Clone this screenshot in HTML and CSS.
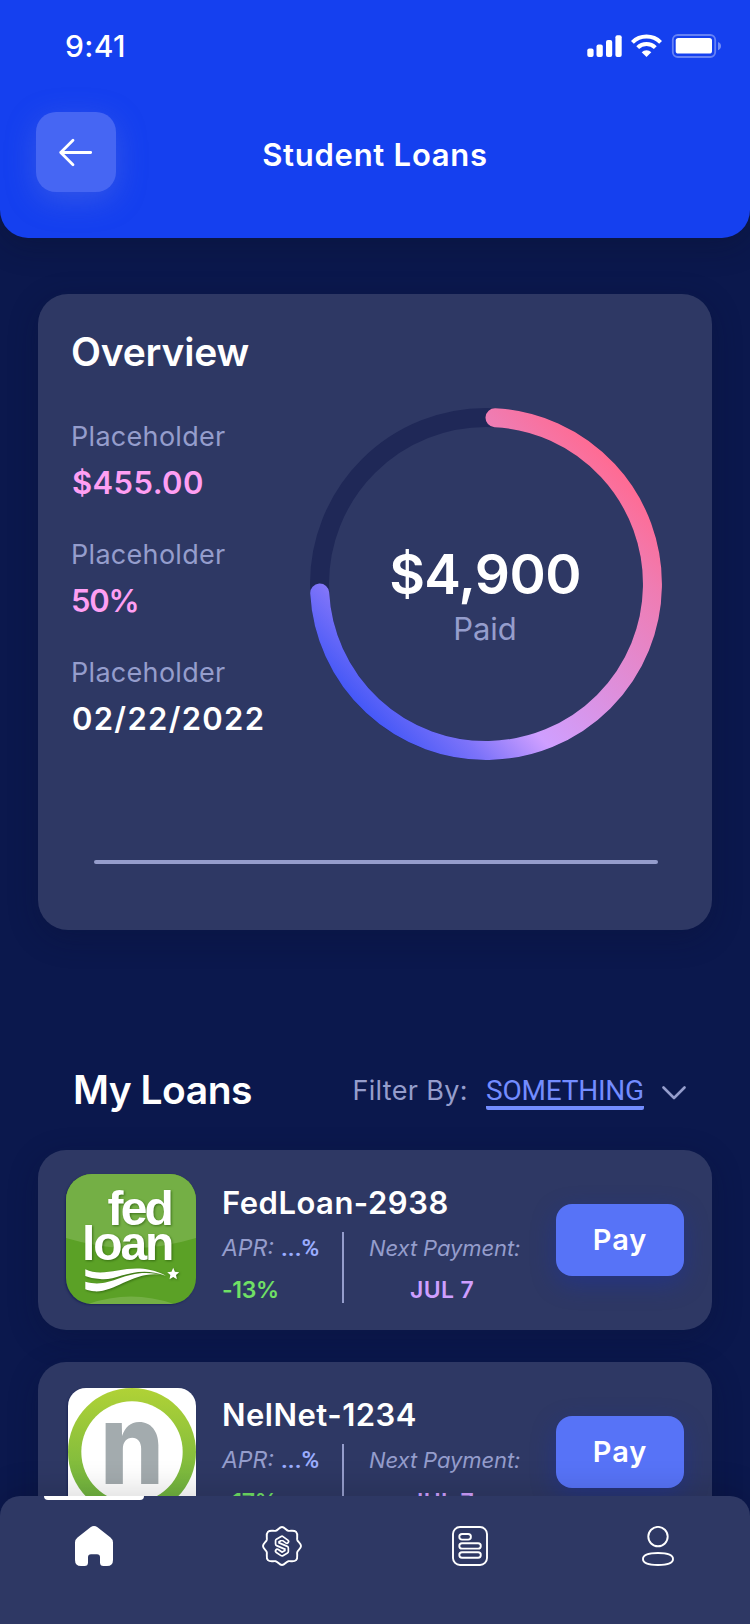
FILE: index.html
```
<!DOCTYPE html>
<html lang="en">
<head>
    <meta charset="UTF-8">
    <title>Student Loans</title>
    <link rel="stylesheet" href="styles.css">
</head>
<body>
<div class="header">
    <div class="status">
        <span>9:41</span>
        <svg width="136" height="24" viewBox="0 0 136 24" fill="#fff">
            <rect x="1.3" y="14.5" width="6.3" height="8.5" rx="2"/>
            <rect x="10.5" y="10.5" width="6.3" height="12.5" rx="2"/>
            <rect x="20" y="6" width="6.2" height="17" rx="2"/>
            <rect x="29.4" y="1.2" width="6.3" height="21.8" rx="2"/>
            <path d="M46.4 8.4a20 20 0 0 1 28.2 0M51.7 13.7a12.5 12.5 0 0 1 17.6 0" fill="none" stroke="#fff" stroke-width="4"/>
            <path d="M60.5 23l-4.8-4.8a6.8 6.8 0 0 1 9.6 0z"/>
            <rect x="86.8" y="1" width="42.4" height="22" rx="5" fill="none" stroke="#fff" stroke-width="1.8" opacity=".35"/>
            <rect x="89.7" y="4" width="36.3" height="15.6" rx="2.6"/>
            <path d="M132 8c4 1.2 4 7 0 8.3z" opacity=".4"/>
        </svg>
    </div>
    <div class="titlebar">
        <button class="back">
            <svg width="80" height="80" viewBox="0 0 80 80" fill="none" stroke="#fff" stroke-width="2.8" stroke-linecap="round" stroke-linejoin="round">
                <path d="M54.7 40.5H24.7M37 28.3L24.7 40.5L37 52.8"/>
            </svg>
        </button>
        <h1>Student Loans</h1>
    </div>
</div>

<div class="overview">
    <h2>Overview</h2>
    <div class="overview-body">
        <div class="stats">
            <div class="stat">
                <span class="label">Placeholder</span>
                <span class="value">$455.00</span>
            </div>
            <div class="stat">
                <span class="label">Placeholder</span>
                <span class="value percent">50%</span>
            </div>
            <div class="stat">
                <span class="label">Placeholder</span>
                <span class="value date">02/22/2022</span>
            </div>
        </div>
        <div class="ring">
            <svg width="352" height="352" viewBox="0 0 352 352" fill="none" stroke-width="19">
                <defs>
                    <linearGradient id="paid" gradientUnits="userSpaceOnUse" x1="49" y1="297" x2="303" y2="55">
                        <stop offset="0" stop-color="#4558f7"/>
                        <stop offset=".15" stop-color="#7d73f9"/>
                        <stop offset=".31" stop-color="#cf9fff"/>
                        <stop offset=".84" stop-color="#ef7cb2"/>
                        <stop offset="1" stop-color="#ff6b93"/>
                    </linearGradient>
                </defs>
                <circle cx="176" cy="176" r="166.5" stroke="#1f2857"/>
                <path d="M185 9.7A166.5 166.5 0 1 1 9.7 185" stroke="url(#paid)" stroke-linecap="round"/>
            </svg>
            <div class="ring-text">
                <span class="amount">$4,900</span>
                <span class="paid">Paid</span>
            </div>
        </div>
    </div>
    <div class="line"></div>
</div>

<div class="loans-head">
    <h2>My Loans</h2>
    <div class="filter">
        <span class="filter-label">Filter By:</span>
        <span class="filter-value">SOMETHING</span>
        <svg width="24" height="14" viewBox="0 0 24 14" fill="none" stroke="#959dcc" stroke-width="2.6" stroke-linecap="round" stroke-linejoin="round">
            <path d="M1.5 1.5L12 12L22.5 1.5"/>
        </svg>
    </div>
</div>

<div class="loans">
    <div class="loan">
        <svg class="logo" width="130" height="130" viewBox="0 0 130 130">
            <rect width="130" height="130" fill="#5ba126"/>
            <path d="M0 0H130V64Q65 84 0 64Z" fill="#74af45"/>
            <path d="M22 130Q65 115 108 130Z" fill="#74af45"/>
            <g class="fed" fill="#fff">
                <text x="41.5" y="51" letter-spacing="-2.84">fed</text>
                <text x="16" y="86" letter-spacing="-2.12">loan</text>
                <path d="M19.3 95.3C42 106 66 84 100 101.7C68 90 50 108 34 105C28 104.5 23 103.5 19.3 102Z"/>
                <path d="M19.3 107.7C48 116 58 91 100 101.7C70 94 50 119 28 117.3C25 117 22 116.5 19.3 115.3Z"/>
                <path d="M107.2 93.8l1.7 4 4.3.4-3.2 2.9.9 4.2-3.7-2.2-3.7 2.2.9-4.2-3.2-2.9 4.3-.4z"/>
            </g>
        </svg>
        <div class="info">
            <h3>FedLoan-2938</h3>
            <div class="details">
                <div class="apr">
                    <div><i>APR:</i><b>...%</b></div>
                    <div class="change">-13%</div>
                </div>
                <div class="next">
                    <i>Next Payment:</i>
                    <span>JUL 7</span>
                </div>
            </div>
        </div>
        <button class="pay">Pay</button>
    </div>
    <div class="loan">
        <svg class="logo nelnet" width="128" height="128" viewBox="0 0 128 128">
            <defs>
                <linearGradient id="green" x1="0" y1="0" x2="0" y2="1">
                    <stop offset="0" stop-color="#b0d236"/>
                    <stop offset="1" stop-color="#64ae42"/>
                </linearGradient>
            </defs>
            <rect width="128" height="128" fill="#fff"/>
            <circle cx="64" cy="64" r="64" fill="url(#green)"/>
            <circle cx="64" cy="64" r="50.7" fill="#fff"/>
            <text x="32" y="95.7" fill="#a3abae" textLength="64" lengthAdjust="spacingAndGlyphs">n</text>
        </svg>
        <div class="info">
            <h3>NelNet-1234</h3>
            <div class="details">
                <div class="apr">
                    <div><i>APR:</i><b>...%</b></div>
                    <div class="change">-17%</div>
                </div>
                <div class="next">
                    <i>Next Payment:</i>
                    <span>JUL 7</span>
                </div>
            </div>
        </div>
        <button class="pay">Pay</button>
    </div>
</div>

<div class="tabs">
    <div class="active"></div>
    <svg width="40" height="40" viewBox="0 0 40 40" fill="#fff">
        <path d="M16.5 1.3Q20 -1.2 23.5 1.3L36.5 11.5Q39 13.5 39 16.5V34Q39 40 33 40H29.5Q26 40 26 36.5V31.3Q26 28.3 23 28.3H17Q14 28.3 14 31.3V36.5Q14 40 10.5 40H7Q1 40 1 34V16.5Q1 13.5 3.5 11.5Z"/>
    </svg>
    <svg width="40" height="40" viewBox="0 0 40 40" fill="none" stroke="#fff" stroke-linejoin="round" stroke-linecap="round">
        <path stroke-width="1.9" d="M13.7 4.8C16 4.3 17.3 1 20 1S24 4.3 26.3 4.8C28.8 5.2 32 3.8 34.1 5.9S34.8 11.2 35.2 13.7C35.7 16 39 17.3 39 20S35.7 24 35.2 26.3C34.8 28.8 36.2 32 34.1 34.1S28.8 34.8 26.3 35.2C24 35.7 22.7 39 20 39S16 35.7 13.7 35.2C11.2 34.8 8 36.2 5.9 34.1S5.2 28.8 4.8 26.3C4.3 24 1 22.7 1 20S4.3 16 4.8 13.7C5.2 11.2 3.8 8 5.9 5.9S11.2 5.2 13.7 4.8Z"/>
        <path stroke-width="5.2" d="M24.8 15.5L20 12L15.3 14.8V18L24.6 22V25.5L20 28.2L15.3 25"/>
        <path stroke="#2e3864" stroke-width="1.8" d="M24.8 15.5L20 12L15.3 14.8V18L24.6 22V25.5L20 28.2L15.3 25"/>
    </svg>
    <svg width="40" height="40" viewBox="0 0 40 40" fill="none" stroke="#fff" stroke-width="1.9">
        <rect x="3" y="1" width="34" height="38" rx="7"/>
        <rect x="9.3" y="8" width="11.6" height="5.6" rx="2.8"/>
        <rect x="9.3" y="17.2" width="21.5" height="5.4" rx="2.7"/>
        <rect x="9.3" y="26.3" width="21.5" height="5.4" rx="2.7"/>
    </svg>
    <svg width="40" height="40" viewBox="0 0 40 40" fill="none" stroke="#fff" stroke-width="1.9">
        <circle cx="20" cy="10.6" r="9.7"/>
        <path d="M5 33C5 28 12 27 20 27S35 28 35 33S28 39 20 39S5 38 5 33Z"/>
    </svg>
</div>
</body>
</html>
```
FILE: styles.css
```
* {
    margin: 0;
    padding: 0;
    box-sizing: border-box;
}
body {
    width: 750px;
    height: 1624px;
    overflow: hidden;
    background-color: #0b184d;
    color: #fff;
    font-family: Inter, Roboto, sans-serif;
}
h1, h2, h3 {
    font-weight: 600;
}
svg {
    display: block;
}
button {
    border: none;
    color: #fff;
    font-family: inherit;
}

.header {
    height: 238px;
    padding-top: 23px;
    background-color: #1540ef;
    border-radius: 0 0 28px 28px;
    box-shadow: 0 8px 30px rgba(10, 15, 40, .3);
}
.status {
    height: 46px;
    padding: 0 28px 0 65px;
    display: flex;
    justify-content: space-between;
    align-items: center;
    font-size: 30px;
    font-weight: 500;
    line-height: 44px;
    letter-spacing: .4px;
}
.titlebar {
    margin-top: 43px;
    padding: 0 36px;
    display: grid;
    grid-template-columns: 80px 1fr 80px;
}
.back {
    width: 80px;
    height: 80px;
    border-radius: 20px;
    background-color: #4666f3;
    box-shadow: 0 8px 30px rgba(110, 130, 220, .35);
}
.titlebar h1 {
    font-size: 31px;
    line-height: 85px;
    letter-spacing: .75px;
    text-align: center;
}

.overview {
    height: 636px;
    margin: 56px 38px 0;
    padding: 34px 0 0 33px;
    background-color: #2e3864;
    border-radius: 30px;
    box-shadow: 0 8px 30px rgba(10, 15, 50, .3);
}
.overview h2 {
    font-size: 39px;
    line-height: 48px;
    letter-spacing: -.2px;
}
.overview-body {
    display: flex;
}
.stats {
    width: 239px;
    margin-top: 45px;
    display: flex;
    flex-direction: column;
    gap: 38px;
}
.stat {
    display: flex;
    flex-direction: column;
    gap: 12px;
}
.label {
    font-size: 27px;
    line-height: 32px;
    letter-spacing: .3px;
    color: #959dcc;
}
.value {
    padding-left: 1px;
    font-size: 31px;
    font-weight: 600;
    line-height: 36px;
    letter-spacing: .4px;
    color: #fe9ff3;
}
.percent {
    padding-left: 0;
    letter-spacing: -1.2px;
}
.date {
    letter-spacing: 1.3px;
    color: #fff;
}
.ring {
    width: 352px;
    height: 352px;
    margin-top: 32px;
    position: relative;
}
.ring-text {
    position: absolute;
    top: 139px;
    left: 0;
    width: 352px;
    text-align: center;
}
.ring-text span {
    display: block;
}
.amount {
    padding-right: 2px;
    font-size: 55px;
    font-weight: 600;
    line-height: 55px;
    letter-spacing: -.6px;
}
.paid {
    margin-top: 11px;
    padding-right: 2px;
    font-size: 31px;
    line-height: 32px;
    color: #959dcc;
}
.line {
    width: 564px;
    height: 4px;
    margin: 100px 0 0 23px;
    border-radius: 2px;
    background-color: #959dcc;
}

.loans-head {
    margin-top: 136px;
    padding: 0 64px 0 73px;
    display: flex;
    justify-content: space-between;
}
.loans-head h2 {
    font-size: 39px;
    line-height: 48px;
    letter-spacing: -.5px;
}
.filter {
    padding-top: 9px;
    display: flex;
    align-items: flex-start;
    font-size: 27px;
    line-height: 32px;
    color: #959dcc;
}
.filter-label {
    margin-right: 18px;
    letter-spacing: .35px;
}
.filter-value {
    width: 158px;
    height: 35px;
    margin-right: 18px;
    font-family: Roboto, sans-serif;
    font-size: 28px;
    letter-spacing: -.22px;
    color: #738cff;
    border-bottom: 4px solid #738cff;
    border-radius: 0 0 2px 2px;
}
.filter svg {
    margin-top: 11px;
}

.loans {
    margin: 36px 38px 0;
    display: flex;
    flex-direction: column;
    gap: 32px;
}
.loan {
    height: 180px;
    padding: 24px 28px;
    display: flex;
    background-color: #2e3864;
    border-radius: 28px;
    box-shadow: 0 8px 30px rgba(10, 15, 50, .3);
}
.logo {
    border-radius: 26px;
    box-shadow: -1px 1px 2px #1c2658;
}
.logo text {
    font-family: "Liberation Sans", sans-serif;
    font-size: 48px;
    font-weight: 700;
}
.fed {
    filter: drop-shadow(1px 1px 1px rgba(40, 90, 10, .7));
}
.nelnet {
    margin: 2px 0 0 2px;
    border-radius: 18px;
}
.nelnet text {
    font-family: Inter, sans-serif;
    font-size: 112px;
    font-weight: 800;
}
.info {
    margin: 10px 0 0 26px;
}
.info h3 {
    font-size: 31px;
    line-height: 38px;
    letter-spacing: .5px;
}
.details {
    height: 71px;
    margin-top: 10px;
    display: flex;
    font-size: 23px;
    line-height: 28px;
}
.details i {
    color: #959dcc;
}
.apr {
    width: 122px;
    padding-top: 2px;
    border-right: 2px solid #959dcc;
}
.apr b {
    margin-left: 7px;
    font-family: Roboto, sans-serif;
    font-size: 24px;
    font-weight: 600;
    color: #9badff;
}
.change {
    margin-top: 14px;
    font-weight: 600;
    letter-spacing: -.35px;
    color: #70e065;
}
.next {
    padding: 2px 0 0 25px;
}
.next i {
    display: block;
    font-size: 22px;
    letter-spacing: -.1px;
}
.next span {
    display: block;
    margin: 14px 0 0 41px;
    font-weight: 600;
    letter-spacing: .36px;
    color: #cf9fff;
}
.pay {
    width: 128px;
    height: 72px;
    margin: 30px 0 0 auto;
    padding-bottom: 2px;
    border-radius: 16px;
    background-color: #5773f7;
    box-shadow: 0 8px 24px rgba(21, 45, 190, .35);
    font-size: 29px;
    font-weight: 600;
    letter-spacing: .9px;
}

/* bottom tab bar */
.tabs {
    position: fixed;
    left: 0;
    bottom: 0;
    width: 750px;
    height: 128px;
    padding: 30px 72px 0 74px;
    display: flex;
    justify-content: space-between;
    background-color: #2e3864;
    border-radius: 20px 20px 0 0;
    box-shadow: 0 -8px 30px rgba(0, 0, 0, .13);
}
.active {
    position: absolute;
    top: 0;
    left: 44px;
    width: 100px;
    height: 4px;
    border-radius: 0 0 4px 4px;
    background-color: #fff;
}
```
